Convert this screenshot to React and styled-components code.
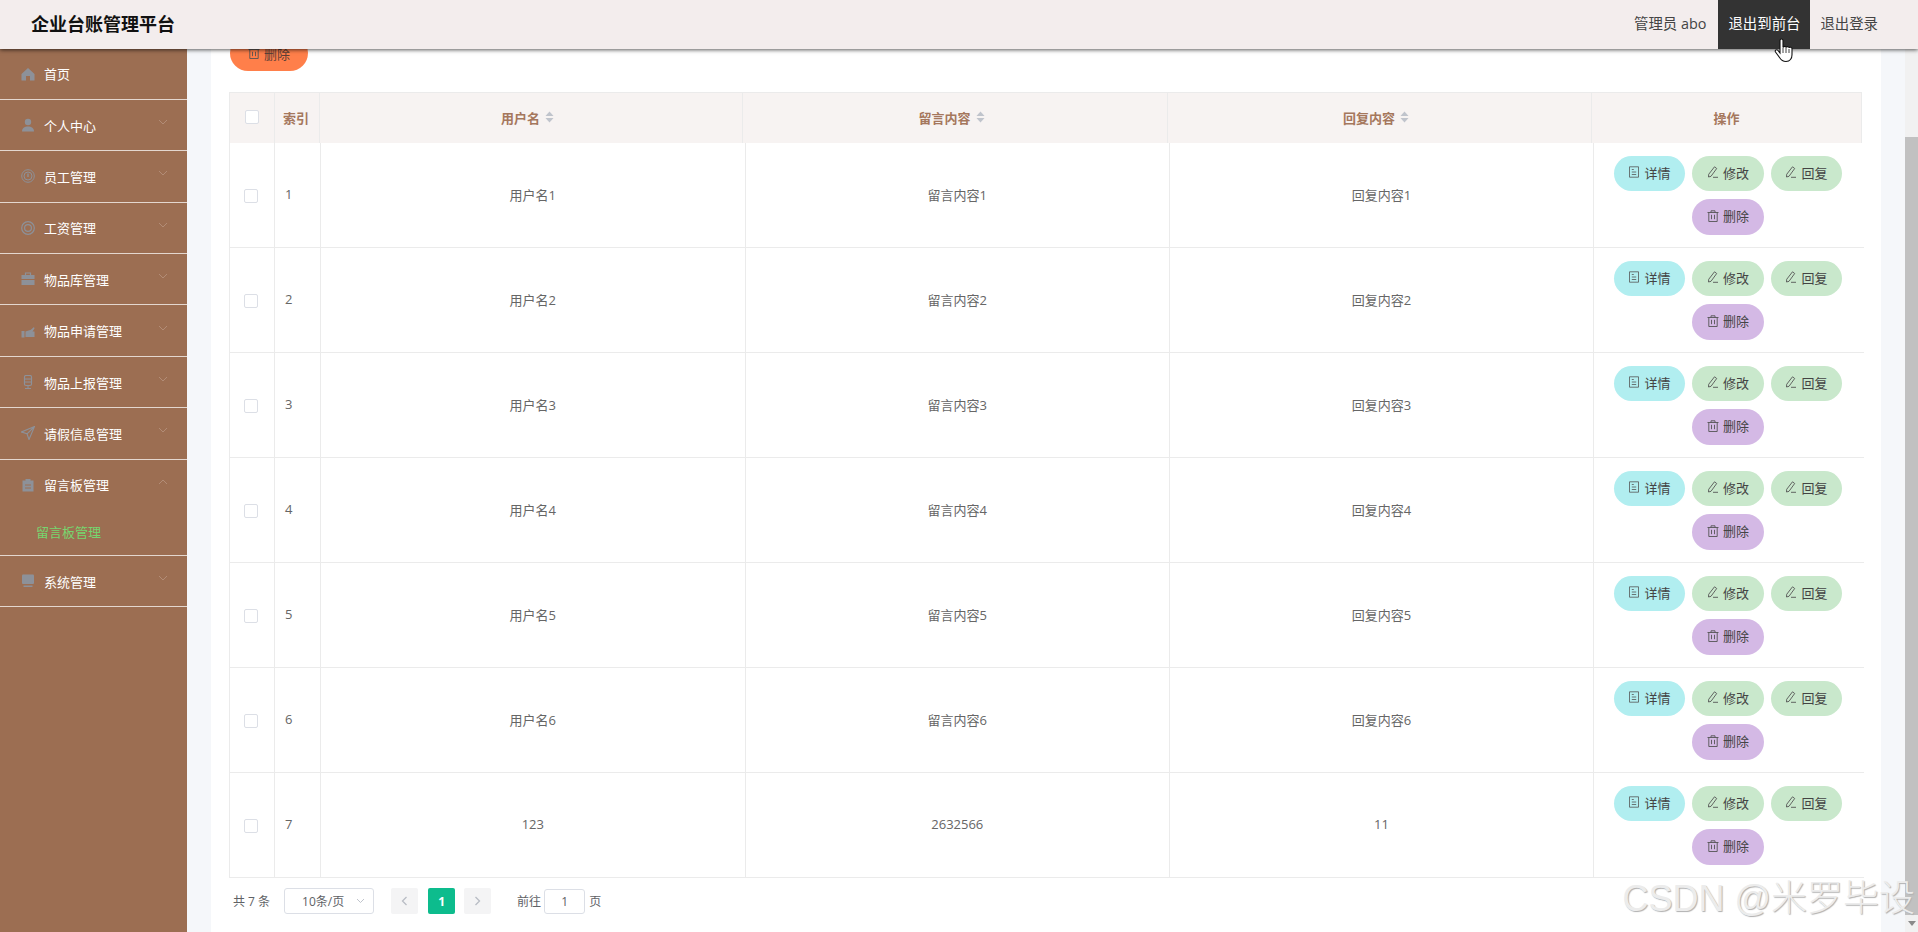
import React from 'react';
import styled, { createGlobalStyle } from 'styled-components';

// column edges differ by a couple of px between head and body in the original
const HEAD_COLUMNS = '46px 45px 423px 425px 424px 270px';
const BODY_COLUMNS = '46px 46px 424.6px 424.4px 424px 270px';
const LINE = '#ebebeb';

const MENU = [
  { name: '首页', icon: 'home' },
  { name: '个人中心', icon: 'user', arrow: 'down' },
  { name: '员工管理', icon: 'gauge', arrow: 'down' },
  { name: '工资管理', icon: 'help', arrow: 'down' },
  { name: '物品库管理', icon: 'case', arrow: 'down' },
  { name: '物品申请管理', icon: 'hand', arrow: 'down' },
  { name: '物品上报管理', icon: 'mic', arrow: 'down' },
  { name: '请假信息管理', icon: 'send', arrow: 'down' },
  { name: '留言板管理', icon: 'board', arrow: 'up', sub: '留言板管理' },
  { name: '系统管理', icon: 'screen', arrow: 'down' },
];

const ROWS = [
  ['1', '用户名1', '留言内容1', '回复内容1'],
  ['2', '用户名2', '留言内容2', '回复内容2'],
  ['3', '用户名3', '留言内容3', '回复内容3'],
  ['4', '用户名4', '留言内容4', '回复内容4'],
  ['5', '用户名5', '留言内容5', '回复内容5'],
  ['6', '用户名6', '留言内容6', '回复内容6'],
  ['7', '123', '2632566', '11'],
];

const GlobalStyle = createGlobalStyle`
  html, body {
    margin: 0;
    padding: 0;
    overflow: hidden;
  }
  * {
    box-sizing: border-box;
  }
  body {
    font-family: "Open Sans", "Noto Sans CJK SC", sans-serif;
  }
`;

const Page = styled.div`
  position: relative;
  display: flex;
  width: 1918px;
  height: 932px;
  overflow: hidden;
`;

const TopBar = styled.header`
  position: absolute;
  top: 0;
  left: 0;
  z-index: 5;
  display: flex;
  align-items: center;
  justify-content: space-between;
  width: 100%;
  height: 49px;
  padding: 0 30px 0 31px;
  background: #f3eded;
  box-shadow: 0 1px 4px rgba(0, 0, 0, 0.65);
`;

const Title = styled.div`
  padding-bottom: 4px;
  font-size: 18px;
  font-weight: 700;
  color: #111;
`;

const TopNav = styled.div`
  display: flex;
  align-items: stretch;
  height: 49px;
`;

const TopLink = styled.div`
  display: flex;
  align-items: center;
  padding: 0 ${(p) => (p.$plain ? '12px' : '10px')} 4px 10px;
  font-size: 14.4px;
  color: ${(p) => (p.$active ? '#fff' : '#444')};
  background: ${(p) => (p.$active ? '#333' : 'transparent')};
`;

const Sidebar = styled.nav`
  flex: 0 0 187px;
  height: 932px;
  padding-top: 48.5px;
  background: #9c6e52;
`;

const MenuGroup = styled.div`
  border-bottom: 1px solid #e4d7cf;
`;

const MenuRow = styled.div`
  display: flex;
  align-items: center;
  height: 50.4px;
  padding: 0 19px 0 21px;
  font-size: 13px;
  color: #fff;
`;

const MenuLabel = styled.span`
  flex: 1;
  margin-left: 9px;
`;

const SubRow = styled.div`
  display: flex;
  align-items: center;
  height: 45px;
  padding: 0 0 2px 36px;
  font-size: 13px;
  color: #76d66f;
`;

const Main = styled.main`
  flex: 1;
  height: 932px;
  padding: 0 24px;
  background: #f5f7fa;
`;

const Card = styled.section`
  height: 932px;
  padding: 35px 17px 0 18px;
  background: #fff;
`;

const DeleteButton = styled.div`
  display: flex;
  align-items: center;
  justify-content: center;
  gap: 4px;
  width: 78px;
  height: 36px;
  margin: 0 0 21px 1px;
  border-radius: 18px;
  font-size: 13px;
  color: #5d4037;
  background: #ff7f4a;
`;

const HeadRow = styled.div`
  display: grid;
  grid-template-columns: ${HEAD_COLUMNS};
  width: 1633px;
  height: 51px;
  border-top: 1px solid ${LINE};
  background: #f7f3f2;
`;

const HeadCell = styled.div`
  display: flex;
  align-items: center;
  justify-content: ${(p) => (p.$left ? 'flex-start' : 'center')};
  gap: 5px;
  padding: 0 ${(p) => (p.$sort ? '7px' : '0')} 2px ${(p) => (p.$left ? '8px' : '0')};
  border-right: 1px solid ${LINE};
  border-left: ${(p) => (p.$first ? `1px solid ${LINE}` : '0')};
  font-size: 13px;
  font-weight: 700;
  color: #a5775d;
`;

const BodyRow = styled.div`
  display: grid;
  grid-template-columns: ${BODY_COLUMNS};
  height: 105px;
  border-bottom: 1px solid ${LINE};
`;

const BodyCell = styled.div`
  display: flex;
  align-items: center;
  justify-content: ${(p) => (p.$left ? 'flex-start' : 'center')};
  padding-top: ${(p) => (p.$first ? '1px' : '0')};
  padding-right: ${(p) => (p.$first ? '3px' : '0')};
  padding-bottom: ${(p) => (p.$first || p.$last ? '0' : '2px')};
  padding-left: ${(p) => (p.$left ? '10px' : '0')};
  border-right: ${(p) => (p.$last ? '0' : `1px solid ${LINE}`)};
  border-left: ${(p) => (p.$first ? `1px solid ${LINE}` : '0')};
  font-size: 13px;
  color: #666;
`;

const Check = styled.span`
  display: block;
  width: 14px;
  height: 14px;
  border: 1px solid #dcdfe6;
  border-radius: 2px;
  background: #fff;
`;

const Actions = styled.div`
  display: flex;
  flex-wrap: wrap;
  justify-content: center;
  gap: 8px 7px;
  width: 240px;
  padding-right: 2px;
`;

const ActionButton = styled.div`
  display: flex;
  align-items: center;
  justify-content: center;
  gap: 4px;
  width: ${(p) => p.$width}px;
  height: 35.5px;
  padding-bottom: 2px;
  border-radius: 18px;
  font-size: 13px;
  color: #444;
  background: ${(p) => p.$bg};
`;

const Pager = styled.div`
  display: flex;
  align-items: center;
  height: 26px;
  margin-top: 10px;
  padding-left: 4px;
  font-size: 12px;
  color: #606266;
`;

const PageSize = styled.div`
  display: flex;
  align-items: center;
  justify-content: space-between;
  width: 90px;
  height: 26px;
  margin: 0 17px 0 14px;
  padding: 0 8px 0 17px;
  border: 1px solid #dcdfe6;
  border-radius: 3px;
`;

const PageButton = styled.div`
  display: flex;
  align-items: center;
  justify-content: center;
  width: 27px;
  height: 26px;
  margin-right: ${(p) => p.$gap || 10}px;
  border-radius: 2px;
  font-weight: 700;
  color: ${(p) => (p.$active ? '#fff' : '#b8bcc4')};
  background: ${(p) => (p.$active ? '#0dbc8d' : '#f4f4f5')};
`;

const JumpInput = styled.div`
  display: flex;
  align-items: center;
  justify-content: center;
  width: 41px;
  height: 25px;
  margin: 0 4px 0 3px;
  border: 1px solid #dcdfe6;
  border-radius: 3px;
`;

const ScrollTrack = styled.div`
  display: flex;
  flex-direction: column;
  flex: 0 0 13px;
  height: 932px;
  padding-top: 137px;
  background: #f1f1f1;
`;

const ScrollThumb = styled.div`
  height: 778px;
  background: #c1c1c1;
`;

const ScrollArrow = styled.div`
  width: 0;
  height: 0;
  margin: 6px auto 0;
  border-top: 5px solid #8a8a8a;
  border-right: 4px solid transparent;
  border-left: 4px solid transparent;
`;

const Watermark = styled.div`
  position: absolute;
  right: 3px;
  bottom: 11px;
  z-index: 4;
  font-family: "Liberation Sans", "Noto Sans CJK SC", sans-serif;
  font-size: 36px;
  font-weight: 300;
  white-space: nowrap;
  color: #ececec;
  text-shadow: 1px 1px 1px #b0b0b0;
`;

const Pointer = styled.svg`
  position: absolute;
  top: 38px;
  left: 1774px;
  z-index: 6;
`;

const IconSvg = styled.svg`
  flex: none;
  display: block;
`;

const GRAY = '#8d9199';

const MenuIcon = ({ type }) => {
  const shapes = {
    home: <path d="M7 1 0.5 7v6.5h4.5V9h4v4.5h4.5V7z" fill={GRAY} />,
    user: (
      <>
        <circle cx="7" cy="4" r="3.2" fill={GRAY} />
        <path d="M1 13.5c0-3.4 2.4-5 6-5s6 1.600 6 5z" fill={GRAY} />
      </>
    ),
    gauge: (
      <>
        <circle cx="7" cy="7" r="6.300" fill="none" stroke={GRAY} strokeWidth="1" />
        <circle cx="7" cy="7" r="4" fill="none" stroke={GRAY} strokeWidth="1" />
        <path d="M7 8V4.500" stroke={GRAY} strokeWidth="1.400" />
      </>
    ),
    help: (
      <>
        <circle cx="7" cy="7" r="6.300" fill="none" stroke={GRAY} strokeWidth="1.200" />
        <circle cx="7" cy="7" r="3.400" fill="none" stroke={GRAY} strokeWidth="1.200" />
      </>
    ),
    case: (
      <>
        <path d="M4.500 3V1h5v2" fill="none" stroke={GRAY} strokeWidth="1.200" />
        <path d="M0.500 3h13v4h-13zM0.500 8h13v5h-13z" fill={GRAY} />
      </>
    ),
    hand: <path d="M0.500 7h3v6.500h-3zM4.500 7.500l3-1 2-.500 3.500-3 .500 1.500-2 3h2v5.500h-9z" fill={GRAY} />,
    mic: (
      <>
        <rect x="3.500" y="0.500" width="7" height="10" rx="1.500" fill="none" stroke={GRAY} strokeWidth="1.200" />
        <path d="M4 4h6M4 7h6M7 10.500v2.500M4 13.500h6" stroke={GRAY} strokeWidth="1" />
      </>
    ),
    send: <path d="M13.500 0.500 0.500 6l5.500 1.800 2 5.700zM6 7.800 13.500 0.500" fill="none" stroke={GRAY} strokeWidth="1.100" />,
    board: (
      <>
        <path d="M1.500 2.500h11v11h-11z" fill={GRAY} />
        <path d="M4.500 1h5v2.500h-5z" fill={GRAY} />
        <path d="M4 7h6M4 10h6" stroke="#9c6e52" strokeWidth="1" />
      </>
    ),
    screen: (
      <>
        <rect x="1" y="0.500" width="12" height="9.500" rx="1" fill={GRAY} />
        <path d="M2.500 11.500h9v1.500h-9z" fill={GRAY} />
      </>
    ),
  };
  return (
    <IconSvg width="14" height="14" viewBox="0 0 14 14">
      {shapes[type]}
    </IconSvg>
  );
};

const Chevron = ({ up }) => (
  <IconSvg width="10" height="6" viewBox="0 0 10 6" style={{ marginTop: -6 }}>
    <path
      d={up ? 'M1 5 5 1l4 4' : 'M1 1l4 4 4-4'}
      fill="none"
      stroke="#b28c76"
      strokeWidth="1"
    />
  </IconSvg>
);

const SortMark = () => (
  <IconSvg width="9" height="12" viewBox="0 0 9 12">
    <path d="M4.500 0.500 8.500 5h-8z" fill="#c0c4cc" />
    <path d="M4.500 11.500 0.500 7h8z" fill="#c0c4cc" />
  </IconSvg>
);

const TicketIcon = () => (
  <IconSvg width="12" height="12" viewBox="0 0 12 12">
    <path d="M1.500 0.800h9v10.400h-9zM3.800 3.500h2M3.800 6h4.400M3.800 8.500h4.400" fill="none" stroke="#555" strokeWidth="0.800" />
  </IconSvg>
);

const EditIcon = () => (
  <IconSvg width="12" height="12" viewBox="0 0 12 12">
    <path d="M7.500 0.800 9.700 2.500 4 10.300 1.500 11 1.700 8.300zM6 11.300h5" fill="none" stroke="#555" strokeWidth="0.900" />
  </IconSvg>
);

const TrashIcon = () => (
  <IconSvg width="12" height="12" viewBox="0 0 12 12">
    <path d="M0.500 2.500h11M4 2.500V0.800h4v1.700M1.800 2.500v9h8.400v-9M4.500 4.800v4.400M7.500 4.800v4.400" fill="none" stroke="#555" strokeWidth="0.900" />
  </IconSvg>
);

const Arrow = ({ right }) => (
  <IconSvg width="7" height="10" viewBox="0 0 7 10">
    <path d={right ? 'M1.500 1l4 4-4 4' : 'M5.500 1l-4 4 4 4'} fill="none" stroke="#b8bcc4" strokeWidth="1.300" />
  </IconSvg>
);

const App = () => {
  return (
    <Page>
      <GlobalStyle />
      <TopBar>
        <Title>企业台账管理平台</Title>
        <TopNav>
          <TopLink $plain>管理员 abo</TopLink>
          <TopLink $active>退出到前台</TopLink>
          <TopLink>退出登录</TopLink>
        </TopNav>
      </TopBar>

      <Sidebar>
        {MENU.map((item) => (
          <MenuGroup key={item.name}>
            <MenuRow>
              <MenuIcon type={item.icon} />
              <MenuLabel>{item.name}</MenuLabel>
              {item.arrow && <Chevron up={item.arrow === 'up'} />}
            </MenuRow>
            {item.sub && <SubRow>{item.sub}</SubRow>}
          </MenuGroup>
        ))}
      </Sidebar>

      <Main>
        <Card>
          <DeleteButton>
            <TrashIcon />
            删除
          </DeleteButton>

          <HeadRow>
            <HeadCell $first>
              <Check />
            </HeadCell>
            <HeadCell $left>索引</HeadCell>
            <HeadCell $sort>
              用户名
              <SortMark />
            </HeadCell>
            <HeadCell $sort>
              留言内容
              <SortMark />
            </HeadCell>
            <HeadCell $sort>
              回复内容
              <SortMark />
            </HeadCell>
            <HeadCell>操作</HeadCell>
          </HeadRow>

          {ROWS.map(([index, user, message, reply]) => (
            <BodyRow key={index}>
              <BodyCell $first>
                <Check />
              </BodyCell>
              <BodyCell $left>{index}</BodyCell>
              <BodyCell>{user}</BodyCell>
              <BodyCell>{message}</BodyCell>
              <BodyCell>{reply}</BodyCell>
              <BodyCell $last>
                <Actions>
                  <ActionButton $bg="#b1eef0" $width={71}>
                    <TicketIcon />
                    详情
                  </ActionButton>
                  <ActionButton $bg="#c9e8cc" $width={72}>
                    <EditIcon />
                    修改
                  </ActionButton>
                  <ActionButton $bg="#c9e8cc" $width={71}>
                    <EditIcon />
                    回复
                  </ActionButton>
                  <ActionButton $bg="#d4b9e5" $width={72}>
                    <TrashIcon />
                    删除
                  </ActionButton>
                </Actions>
              </BodyCell>
            </BodyRow>
          ))}

          <Pager>
            <span>共 7 条</span>
            <PageSize>
              <span>10条/页</span>
              <IconSvg width="9" height="6" viewBox="0 0 9 6">
                <path d="M1 1l3.500 3.500L8 1" fill="none" stroke="#c0c4cc" strokeWidth="1" />
              </IconSvg>
            </PageSize>
            <PageButton>
              <Arrow />
            </PageButton>
            <PageButton $active $gap={9}>1</PageButton>
            <PageButton $gap={26}>
              <Arrow right />
            </PageButton>
            <span>前往</span>
            <JumpInput>1</JumpInput>
            <span>页</span>
          </Pager>
        </Card>
      </Main>

      <ScrollTrack>
        <ScrollThumb />
        <ScrollArrow />
      </ScrollTrack>

      <Watermark>CSDN @米罗毕设</Watermark>

      <Pointer width="20" height="26" viewBox="0 0 20 26">
        <path
          d="M6 2.500c0-2 3-2 3 0v7c.5-1.500 3-1.500 3 0 .5-1.300 3-1.200 3 .3.500-1 3-.8 3 1v6c0 3.500-2 6.700-6 6.700-3.500 0-5-1.500-6.500-4L1.500 14c-1-1.800 1.200-3 2.500-1.500L6 15z"
          fill="#fff"
          stroke="#111"
          strokeWidth="1.100"
        />
        <path d="M9 10v5M12 10v5M15 11v4" stroke="#111" strokeWidth="0.800" />
      </Pointer>
    </Page>
  );
};

export default App;
